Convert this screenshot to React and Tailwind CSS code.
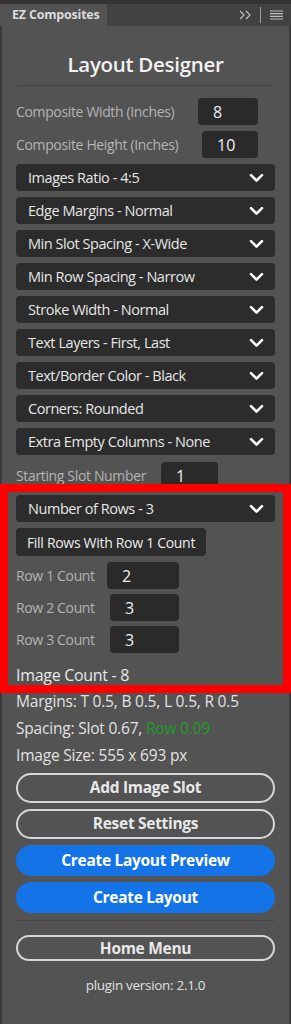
const font = { fontFamily: '"Open Sans", "Noto Sans", sans-serif' };

function Chevron() {
  return (
    <svg width="15" height="10" viewBox="0 0 15 10" fill="none" stroke="white" strokeWidth="2.6" strokeLinecap="round" strokeLinejoin="round" className="shrink-0">
      <path d="M2 2.2l5.5 5.5L13 2.2" />
    </svg>
  );
}

function Select({ label }) {
  return (
    <div className="flex items-center justify-between h-[27px] rounded-[4px] bg-[#2c2c2c] pl-[12px] pr-[11px] text-[14.5px] tracking-[-0.45px] text-[#e6e6e6]">
      <span className="whitespace-nowrap">{label}</span>
      <Chevron />
    </div>
  );
}

function NumberField({ label, value, labelWidth, inputWidth, pad = 15 }) {
  return (
    <div className="flex items-center h-[27px]">
      <span className="text-[14px] tracking-[-0.35px] text-[#b4b4b4] whitespace-nowrap shrink-0" style={{ width: labelWidth }}>{label}</span>
      <div
        className="h-[27px] rounded-[4px] bg-[#2a2a2a] flex items-center text-[16px] text-[#eeeeee] shrink-0"
        style={{ width: inputWidth, paddingLeft: pad }}
      >
        {value}
      </div>
    </div>
  );
}

function OutlineButton({ children, className = '' }) {
  return (
    <button className={`w-full rounded-full border-2 border-[#d6d6d6] text-[15.5px] tracking-[-0.3px] font-bold text-[#e8e8e8] ${className}`}>
      {children}
    </button>
  );
}

function BlueButton({ children }) {
  return (
    <button className="w-full h-[31px] rounded-full bg-[#1473e6] text-[15.5px] tracking-[-0.3px] font-bold text-white">
      {children}
    </button>
  );
}

const selects = [
  'Images Ratio - 4:5',
  'Edge Margins - Normal',
  'Min Slot Spacing - X-Wide',
  'Min Row Spacing - Narrow',
  'Stroke Width - Normal',
  'Text Layers - First, Last',
  'Text/Border Color - Black',
  'Corners: Rounded',
  'Extra Empty Columns - None',
];

export default function App() {
  return (
    <div className="w-[291px] min-h-[1024px] bg-[#535353] flex flex-col" style={font}>
      <div className="h-[4px] bg-[#333333]" />
      <div className="flex h-[22px] bg-[#424242]">
        <div className="w-[107px] bg-[#535353] pl-[12px] flex items-center text-[12.5px] tracking-[-0.2px] font-bold text-[#dcdcdc] whitespace-nowrap">
          EZ Composites
        </div>
        <div className="flex-1 flex items-center justify-end pr-[8px]">
          <svg width="13" height="10" viewBox="0 0 13 10" fill="none" stroke="#bdbdbd" strokeWidth="1.2">
            <path d="M1 1l4 4-4 4M7 1l4 4-4 4" />
          </svg>
          <div className="w-px h-[16px] bg-[#9a9a9a] ml-[8px] mr-[9px]" />
          <svg width="13" height="10" viewBox="0 0 13 10" fill="none" stroke="#bdbdbd" strokeWidth="1.2">
            <path d="M0 1h13M0 3.7h13M0 6.3h13M0 9h13" />
          </svg>
        </div>
      </div>

      <div className="flex-1 border-x-[2px] border-[#3b3b3b] flex flex-col">
        <div className="px-[14px]">
          <h1 className="text-center text-[20.5px] tracking-[-0.3px] font-semibold text-[#f2f2f2] leading-[28px] mt-[24px]">
            Layout Designer
          </h1>
          <div className="h-px bg-[#454545] mt-[7px] mx-[1px]" />

          <div className="mt-[12px] flex flex-col gap-[6px]">
            <NumberField label="Composite Width (Inches)" value="8" labelWidth={182} inputWidth={60} />
            <NumberField label="Composite Height (Inches)" value="10" labelWidth={186} inputWidth={56} />
          </div>

          <div className="mt-[6px] flex flex-col gap-[6px]">
            {selects.map((s) => (
              <Select key={s} label={s} />
            ))}
          </div>

          <div className="mt-[7px]">
            <NumberField label="Starting Slot Number" value="1" labelWidth={145} inputWidth={57} pad={15} />
          </div>
        </div>

        <div className="relative -mt-[5px] -mx-[2px] border-[8px] border-[#ff0000] bg-[#535353] px-[8px] pt-[3px]">
          <Select label="Number of Rows - 3" />
          <button className="mt-[6px] h-[28px] w-[190px] px-0 whitespace-nowrap rounded-[4px] bg-[#2c2c2c] text-[14px] tracking-[-0.3px] text-[#ececec]">
            Fill Rows With Row 1 Count
          </button>
          <div className="mt-[6px] flex flex-col gap-[5px]">
            <NumberField label="Row 1 Count" value="2" labelWidth={91} inputWidth={72} />
            <NumberField label="Row 2 Count" value="3" labelWidth={94} inputWidth={69} />
            <NumberField label="Row 3 Count" value="3" labelWidth={94} inputWidth={69} />
          </div>
          <div className="mt-[12px] text-[16px] tracking-[-0.3px] text-[#e8e8e8] leading-[20px]">Image Count - 8</div>
        </div>

        <div className="px-[14px]">
          <div className="-mt-[2px] flex flex-col gap-[7px] text-[15.5px] tracking-[-0.2px] text-[#e2e2e2] leading-[20px] whitespace-nowrap">
            <div>Margins: T 0.5, B 0.5, L 0.5, R 0.5</div>
            <div>
              Spacing: Slot 0.67, <span className="text-[#1e9e2a]">Row 0.09</span>
            </div>
            <div>Image Size: 555 x 693 px</div>
          </div>

          <div className="mt-[8px] flex flex-col gap-[6px]">
            <OutlineButton className="h-[30px]">Add Image Slot</OutlineButton>
            <OutlineButton className="h-[30px]">Reset Settings</OutlineButton>
            <BlueButton>Create Layout Preview</BlueButton>
            <BlueButton>Create Layout</BlueButton>
          </div>

          <div className="h-px bg-[#454545] mt-[7px] mx-[1px]" />

          <div className="mt-[14px]">
            <OutlineButton className="h-[26px]">Home Menu</OutlineButton>
          </div>

          <div className="mt-[14px] text-center text-[13.5px] tracking-[-0.3px] text-[#e0e0e0]">plugin version: 2.1.0</div>
        </div>
      </div>
    </div>
  );
}
